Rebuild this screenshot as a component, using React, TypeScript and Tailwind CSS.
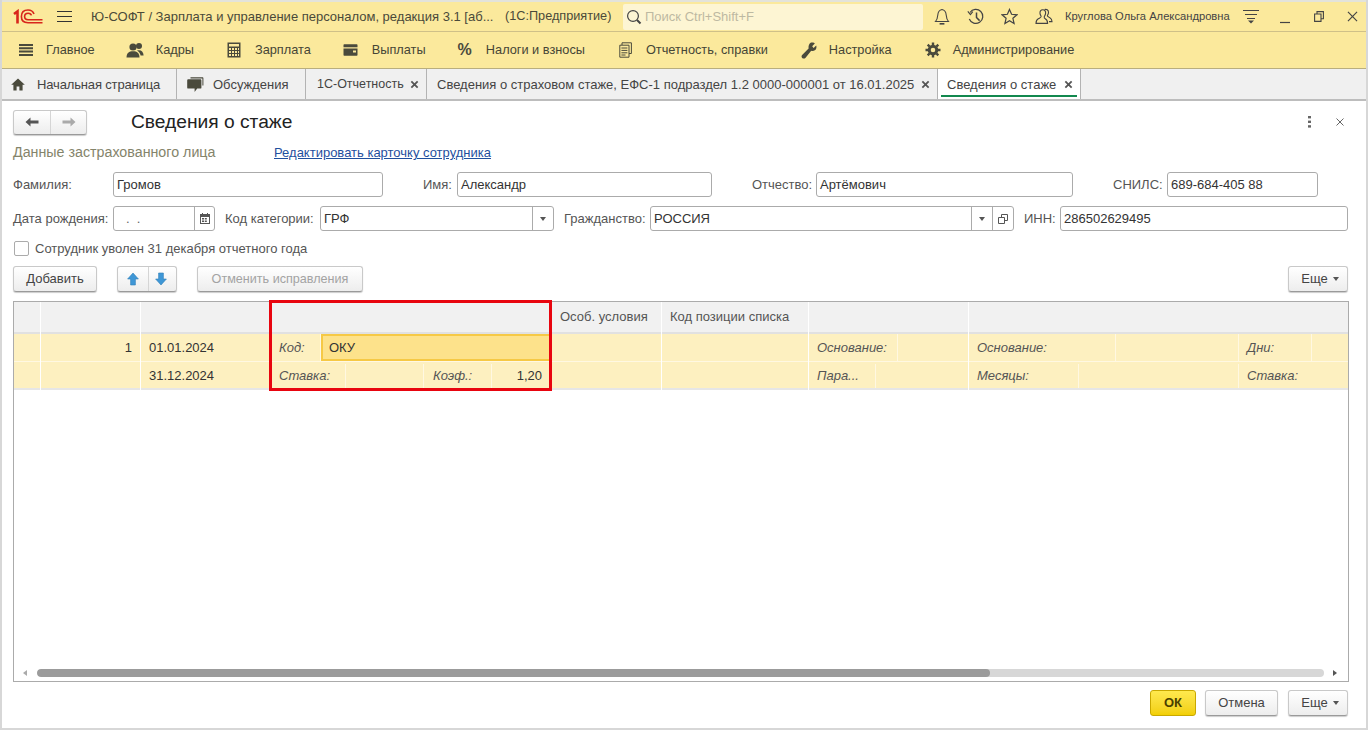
import React from "react";

function Logo() {
  return (
    <svg width="30" height="15" viewBox="0 0 30 15" fill="none" stroke="#d8261c">
      <path d="M1 5L4.5 2.4V14.6" strokeWidth="2.6" />
      <path d="M21 5 C20 2.2 18 1 15 1 C10.5 1 8.4 4 8.4 7.6 C8.4 11.4 10.5 13.8 15 13.8 H29.5" strokeWidth="1.6" />
      <path d="M18.4 6.4 C18 5 16.8 4.2 15.2 4.2 C12.8 4.2 11.6 5.8 11.6 7.6 C11.6 9.6 12.8 10.8 15.2 10.8 H29.5" strokeWidth="1.6" />
    </svg>
  );
}

function Icon({ name }: { name: string }) {
  const c = "#4a4a3c";
  if (name === "menu")
    return (
      <svg width="16" height="14" viewBox="0 0 16 14" stroke={c} strokeWidth="2">
        <path d="M1 2H15M1 5.2H15M1 8.6H15M1 12H15" />
      </svg>
    );
  if (name === "people")
    return (
      <svg width="18" height="16" viewBox="0 0 18 16" fill={c}>
        <circle cx="7" cy="5" r="3.6" />
        <path d="M0.5 15.5C0.5 11 3 9.2 7 9.2S13.5 11 13.5 15.5Z" />
        <circle cx="13" cy="4" r="3" />
        <path d="M11 8.4C15 7.4 17.6 9.4 17.6 13.6H14.6C14.4 11.4 13 9.6 11 8.4Z" />
      </svg>
    );
  if (name === "calc")
    return (
      <svg width="14" height="16" viewBox="0 0 14 16" fill={c}>
        <path fillRule="evenodd" d="M0.5 0.5H13.5V15.5H0.5ZM2 2V4.5H12V2ZM2 6V8H4V6ZM5 6V8H7V6ZM8 6V8H10V6ZM11 6V8H12V6ZM2 9V11H4V9ZM5 9V11H7V9ZM8 9V11H10V9ZM11 9V11H12V9ZM2 12V14H4V12ZM5 12V14H7V12ZM8 12V14H10V12ZM11 12V14H12V12Z" />
      </svg>
    );
  if (name === "card")
    return (
      <svg width="15" height="12" viewBox="0 0 15 12" fill={c}>
        <path fillRule="evenodd" d="M0.5 1C0.5 0.6 0.8 0.2 1.2 0.2H13.8C14.2 0.2 14.5 0.6 14.5 1V11C14.5 11.4 14.2 11.8 13.8 11.8H1.2C0.8 11.8 0.5 11.4 0.5 11ZM0.5 3.2V4.4H14.5V3.2ZM10 6.6V8.6H13V6.6Z" />
      </svg>
    );
  if (name === "docs")
    return (
      <svg width="13" height="16" viewBox="0 0 13 16" fill="none" stroke={c} strokeWidth="1">
        <path d="M3 3V0.8H12.4V11.5H10" />
        <path d="M0.8 3.2H10V15.2H0.8Z" />
        <path d="M2.4 6H8.4M2.4 8.4H8.4M2.4 10.8H8.4M2.4 13H6.5" />
      </svg>
    );
  if (name === "wrench")
    return (
      <svg width="16" height="17" viewBox="0 0 16 17" fill={c}>
        <path d="M10 0.6C12 0.2 13.2 0.8 13.8 1.4L11.2 4.2L12.6 6L15.2 3.4C15.8 5.2 15.4 7 14.2 8C13 9 11.4 9.2 10.2 8.8L4.4 16C3.4 16.9 1.9 16.7 1.2 15.9C0.4 15 0.3 13.8 1.1 12.9L7.6 6.6C7.2 4.2 8 1.6 10 0.6Z" />
      </svg>
    );
  if (name === "gear")
    return (
      <svg width="16" height="16" viewBox="0 0 16 16" fill="none" stroke={c}>
        <circle cx="8" cy="8" r="3.8" strokeWidth="3" />
        <path d="M8 0.5V3M8 13V15.5M0.5 8H3M13 8H15.5M2.7 2.7L4.5 4.5M11.5 11.5L13.3 13.3M13.3 2.7L11.5 4.5M4.5 11.5L2.7 13.3" strokeWidth="2.4" />
      </svg>
    );
  if (name === "home")
    return (
      <svg width="14" height="13" viewBox="0 0 14 13" fill={c}>
        <path d="M7 0.5L13.8 6.8H11.6V12.6H8.4V8.4H5.6V12.6H2.4V6.8H0.2Z" />
      </svg>
    );
  if (name === "chat")
    return (
      <svg width="17" height="17" viewBox="0 0 17 17" fill={c}>
        <path d="M3.5 1.2H15.4C16 1.2 16.4 1.6 16.4 2.2V9.6H15.4V2.4H3.5Z" />
        <path d="M1.4 3.2H13.2C14 3.2 14.4 3.6 14.4 4.4V11.4C14.4 12.2 14 12.6 13.2 12.6H10.2L7.6 16V12.6H1.4C0.7 12.6 0.2 12.2 0.2 11.4V4.4C0.2 3.6 0.7 3.2 1.4 3.2Z" />
      </svg>
    );
  return null;
}

const navItems: [string, string, string][] = [
  ["menu", "Главное", "ml-[18px] mr-[12px]"],
  ["people", "Кадры", "ml-[31px] mr-[12px]"],
  ["calc", "Зарплата", "ml-[33px] mr-[14px]"],
  ["card", "Выплаты", "ml-[32px] mr-[14px]"],
  ["percent", "Налоги и взносы", "ml-[32px] mr-[14px]"],
  ["docs", "Отчетность, справки", "ml-[34px] mr-[14px]"],
  ["wrench", "Настройка", "ml-[33px] mr-[12px]"],
  ["gear", "Администрирование", "ml-[33px] mr-[12px]"],
];

function X({ size = 9, sw = 2, color = "#555" }: { size?: number; sw?: number; color?: string }) {
  return (
    <svg width={size} height={size} viewBox="0 0 10 10" stroke={color} strokeWidth={sw}>
      <path d="M1.5 1.5L8.5 8.5M8.5 1.5L1.5 8.5" />
    </svg>
  );
}

function Tab({ children, w, active, close }: { children: React.ReactNode; w: string; active?: boolean; close?: boolean }) {
  return (
    <div className={`relative flex h-full items-center justify-between border-r border-[#b3b3b3] pt-px ${w} ${active ? "bg-white" : ""}`}>
      {children}
      {close && <span className="mr-[7px] flex"><X /></span>}
      {active && <div className="absolute bottom-[2px] left-[3px] right-[3px] h-[2px] bg-[#12884e]" />}
    </div>
  );
}

const inputCls = "flex items-center h-[25px] border border-[#ababab] rounded-[3px] bg-white text-[#333] pl-[3px]";
const btnCls = "rounded-[3px] border border-[#c9c9c9] border-b-[#9a9a9a] bg-gradient-to-b from-white to-[#ededed] shadow-[0_1px_1px_rgba(0,0,0,0.2)]";

function Caret() {
  return (
    <svg width="6" height="4" viewBox="0 0 6 4" fill="#555">
      <path d="M0 0H6L3 4Z" />
    </svg>
  );
}

function Btn({ className, children, disabled }: { className?: string; children: React.ReactNode; disabled?: boolean }) {
  return (
    <div className={`flex h-[26px] items-center justify-center ${btnCls} ${disabled ? "text-[#a3a3a3]" : "text-[#444]"} ${className ?? ""}`}>
      {children}
    </div>
  );
}

function Arrow({ up }: { up?: boolean }) {
  return (
    <svg width="12" height="14" viewBox="0 0 12 14" fill="#3f97d6" stroke="#2f7fb8" strokeWidth="0.6">
      {up ? <path d="M6 1L11.4 7H8.4V13H3.6V7H0.6Z" /> : <path d="M6 13L11.4 7H8.4V1H3.6V7H0.6Z" />}
    </svg>
  );
}

function HArrow({ left, color }: { left?: boolean; color: string }) {
  return (
    <svg width="14" height="10" viewBox="0 0 14 10" fill={color}>
      {left ? <path d="M0.5 5L5.5 0.5V3.6H13.5V6.4H5.5V9.5Z" /> : <path d="M13.5 5L8.5 0.5V3.6H0.5V6.4H8.5V9.5Z" />}
    </svg>
  );
}

const L = ({ w, children, className }: { w: string; children?: React.ReactNode; className?: string }) => (
  <div className={`flex h-full shrink-0 items-center overflow-hidden whitespace-nowrap border-r border-[#fff8e2] pl-[8px] italic text-[#555] ${w} ${className ?? ""}`}>
    {children}
  </div>
);

function Col({ w, head, r1, r2, last }: { w: string; head?: string; r1?: React.ReactNode; r2?: React.ReactNode; last?: boolean }) {
  return (
    <div className={`flex shrink-0 flex-col ${w} ${last ? "" : "border-r border-white"}`}>
      <div className="flex h-[32px] items-center whitespace-nowrap border-b-2 border-[#e1e1e1] bg-[#f1f1f1] pl-[8px] text-[#555]">{head}</div>
      <div className="flex h-[28px] items-center border-b border-[#fff8e2] bg-[#fdf0c0]">{r1}</div>
      <div className="flex h-[28px] items-center border-b-2 border-[#e6e6e6] bg-[#fdf0c0] pt-[2px]">{r2}</div>
    </div>
  );
}

export default function App() {
  return (
    <div
      className="box-border flex h-[730px] w-[1368px] flex-col overflow-hidden border-x-2 border-b-2 border-[#d7d7d7] bg-white text-[13px]"
      style={{ fontFamily: '"Liberation Sans", Arial, sans-serif' }}
    >
      {/* title bar */}
      <div className="-mx-[2px] flex h-[32px] shrink-0 items-center border-t-[2px] border-b border-[#e3e3da] border-b-[#cfc088] bg-[#fbe99c] text-[#4a4a3a]">
        <span className="ml-[13px] flex w-[30px]"><Logo /></span>
        <span className="ml-[14px] flex w-[15px] flex-col gap-[4px]">
          <i className="h-px bg-[#333]" /><i className="h-px bg-[#333]" /><i className="h-px bg-[#333]" />
        </span>
        <span className="ml-[19px] w-[403px] whitespace-nowrap">Ю-СОФТ / Зарплата и управление персоналом, редакция 3.1 [аб...</span>
        <span className="ml-[11px] w-[107px] whitespace-nowrap text-[12.7px]">(1С:Предприятие)</span>
        <div className="ml-[11px] flex h-[26px] w-[300px] items-center rounded-[2px] bg-[#fdf5d3] pl-[3px] text-[#bdb9a2]">
          <svg width="16" height="16" viewBox="0 0 16 16" fill="none" stroke="#444" strokeWidth="1.2">
            <circle cx="7" cy="7" r="5.4" />
            <path d="M11 11L14.5 14.5" strokeWidth="2" />
          </svg>
          <span className="ml-[3px]">Поиск Ctrl+Shift+F</span>
        </div>
        <svg className="ml-[11px]" width="16" height="18" viewBox="0 0 16 18" fill="none" stroke="#444" strokeWidth="1.1">
          <path d="M8 1.5C5.2 2 4 4 3.8 7C3.6 10 2.8 12 1.5 13.5H14.5C13.2 12 12.4 10 12.2 7C12 4 10.8 2 8 1.5Z" />
          <path d="M5.6 15.8H10.4" strokeWidth="1.6" />
        </svg>
        <svg className="ml-[17px]" width="18" height="18" viewBox="0 0 18 18" fill="none" stroke="#444" strokeWidth="1.2">
          <path d="M3 4.5A7 7 0 1 1 2.3 11" />
          <path d="M0.8 3.4L3.4 6.6L5.8 3.6" strokeWidth="1.1" />
          <path d="M9.5 4.5V9.5L12.6 12.6" strokeWidth="1.5" />
        </svg>
        <svg className="ml-[16px]" width="17" height="17" viewBox="0 0 17 17" fill="none" stroke="#444" strokeWidth="1.2">
          <path d="M8.5 1.4L10.6 6.3L15.9 6.8L11.9 10.3L13.1 15.6L8.5 12.8L3.9 15.6L5.1 10.3L1.1 6.8L6.4 6.3Z" />
        </svg>
        <svg className="ml-[17px]" width="18" height="17" viewBox="0 0 18 17" fill="none" stroke="#444" strokeWidth="1.1">
          <path d="M7.8 1.8C5.6 1.8 4.8 3.6 5 5.4C5.1 6.8 5.8 7.6 6.2 8.2C6.4 9.4 5 9.8 3.6 10.6C2 11.4 1 12.4 1 15.4H12.6C12.6 12.4 11.6 11.4 10 10.6C8.8 10 9.2 9.4 9.4 8.2C9.8 7.6 10.5 6.8 10.6 5.4C10.8 3.6 10 1.8 7.8 1.8Z" />
          <path d="M9.6 1.6C11.4 0.8 13.6 2 13.5 4.6C13.4 6 12.8 6.8 12.4 7.4C12.4 8.6 13.4 8.8 14.6 9.6C16 10.4 17 11.4 17 13.6H14" />
        </svg>
        <span className="ml-[12px] w-[165px] whitespace-nowrap text-[11.2px] text-[#444]">Круглова Ольга Александровна</span>
        <svg className="ml-[13px]" width="16" height="15" viewBox="0 0 16 15" fill="#444">
          <rect x="0" y="1" width="16" height="1" />
          <rect x="2" y="5" width="12" height="1" />
          <rect x="4" y="9" width="8" height="1" />
          <path d="M5 11.5H11L8 14.5Z" />
        </svg>
        <svg className="ml-[21px]" width="10" height="14" viewBox="0 0 10 14" stroke="#444"><path d="M0 12.5H10" strokeWidth="1.2" /></svg>
        <svg className="ml-[24px]" width="10" height="11" viewBox="0 0 10 11" fill="none" stroke="#444" strokeWidth="1.1">
          <path d="M0.6 3H7V10.4H0.6Z" />
          <path d="M3 3V0.6H9.4V7.8H7" />
        </svg>
        <span className="ml-[22px] flex"><X size={13} sw={0.9} color="#444" /></span>
      </div>

      {/* section bar */}
      <div className="-mx-[2px] flex h-[37px] shrink-0 items-center border-b border-[#b9ae7e] bg-[#fbe99c] text-[12.75px] text-[#454536]">
        {navItems.map(([ic, label, cls]) => (
          <div key={label} className="flex items-center">
            <span className={`flex ${cls}`}>
              {ic === "percent" ? (
                <span className="text-[16px] font-bold leading-none text-[#4a4a3c]">%</span>
              ) : (
                <Icon name={ic} />
              )}
            </span>
            <span className="whitespace-nowrap">{label}</span>
          </div>
        ))}
      </div>

      {/* tabs */}
      <div className="-mx-[2px] flex h-[32px] shrink-0 items-center border-b-2 border-[#bdbdbd] bg-[#f0f0f0] text-[#444]">
        <Tab w="w-[177px]">
          <span className="ml-[11px] flex"><Icon name="home" /></span>
          <span className="ml-[12px] mr-auto whitespace-nowrap tracking-[-0.15px]">Начальная страница</span>
        </Tab>
        <Tab w="w-[129px]">
          <span className="ml-[10px] flex"><Icon name="chat" /></span>
          <span className="ml-[9px] mr-auto">Обсуждения</span>
        </Tab>
        <Tab w="w-[121px]" close>
          <span className="ml-[11px] whitespace-nowrap text-[12.5px]">1С-Отчетность</span>
        </Tab>
        <Tab w="w-[511px]" close>
          <span className="ml-[10px] whitespace-nowrap">Сведения о страховом стаже, ЕФС-1 подраздел 1.2 0000-000001 от 16.01.2025</span>
        </Tab>
        <Tab w="w-[143px]" active close>
          <span className="ml-[9px] whitespace-nowrap">Сведения о стаже</span>
        </Tab>
      </div>

      {/* form */}
      <div className="flex min-h-0 flex-1 flex-col text-[#555]">
        <div className="mt-[8px] flex h-[26px] items-center pl-[11px]">
          <div className={`flex h-[25px] w-[74px] ${btnCls}`}>
            <div className="flex w-[37px] items-center justify-center border-r border-[#d5d5d5]"><HArrow left color="#555" /></div>
            <div className="flex flex-1 items-center justify-center"><HArrow color="#aaa" /></div>
          </div>
          <div className="ml-[44px] whitespace-nowrap text-[19.2px] text-[#222]">Сведения о стаже</div>
          <div className="ml-auto flex items-center">
            <svg width="3" height="12" viewBox="0 0 3 12" fill="#666"><rect width="3" height="2.4" /><rect y="4.6" width="3" height="2.4" /><rect y="9.2" width="3" height="2.4" /></svg>
            <span className="ml-[24px] mr-[21px] flex"><X size={10} sw={1} color="#666" /></span>
          </div>
        </div>

        <div className="mt-[10px] flex h-[16px] items-center pl-[11px]">
          <span className="w-[261px] whitespace-nowrap text-[14.25px] text-[#84846b]">Данные застрахованного лица</span>
          <span className="whitespace-nowrap text-[#1f4f9e] underline">Редактировать карточку сотрудника</span>
        </div>

        <div className="mt-[11px] flex h-[25px] items-center pl-[11px]">
          <span className="w-[100px]">Фамилия:</span>
          <div className={`${inputCls} w-[270px]`}>Громов</div>
          <span className="ml-[40px] w-[34px]">Имя:</span>
          <div className={`${inputCls} w-[255px]`}>Александр</div>
          <span className="ml-[40px] w-[64px]">Отчество:</span>
          <div className={`${inputCls} w-[257px]`}>Артёмович</div>
          <span className="ml-[40px] w-[54px]">СНИЛС:</span>
          <div className={`${inputCls} w-[151px]`}>689-684-405 88</div>
        </div>

        <div className="mt-[9px] flex h-[25px] items-center pl-[11px]">
          <span className="w-[100px] whitespace-nowrap">Дата рождения:</span>
          <div className={`${inputCls} w-[102px] !pl-0`}>
            <span className="w-[80px] pl-[12px] text-[#666]">.&nbsp;&nbsp;.</span>
            <span className="flex h-full flex-1 items-center justify-center border-l border-[#ababab]">
              <svg width="10" height="11" viewBox="0 0 10 11" fill="#555">
                <path fillRule="evenodd" d="M0 1H2V0H3V1H7V0H8V1H10V11H0ZM1 4V10H9V4ZM2 5H4V6.5H2ZM4.8 5H6.8V6.5H4.8ZM2 7.5H4V9H2ZM4.8 7.5H6.8V9H4.8Z" />
              </svg>
            </span>
          </div>
          <span className="ml-[10px] w-[95px] whitespace-nowrap">Код категории:</span>
          <div className={`${inputCls} w-[234px] !pr-0`}>
            <span className="flex-1">ГРФ</span>
            <span className="flex h-full w-[21px] items-center justify-center border-l border-[#ababab]"><Caret /></span>
          </div>
          <span className="ml-[10px] w-[86px] whitespace-nowrap">Гражданство:</span>
          <div className={`${inputCls} w-[364px] !pr-0`}>
            <span className="flex-1">РОССИЯ</span>
            <span className="flex h-full w-[21px] items-center justify-center border-l border-[#ababab]"><Caret /></span>
            <span className="flex h-full w-[21px] items-center justify-center border-l border-[#ababab]">
              <svg width="10" height="10" viewBox="0 0 10 10" fill="none" stroke="#555">
                <path d="M3.5 3.5V0.5H9.5V6.5H6.5" />
                <path d="M0.5 3.5H6.5V9.5H0.5Z" />
              </svg>
            </span>
          </div>
          <span className="ml-[10px] w-[36px]">ИНН:</span>
          <div className={`${inputCls} w-[288px]`}>286502629495</div>
        </div>

        <div className="mt-[10px] flex h-[15px] items-center pl-[12px]">
          <span className="h-[15px] w-[15px] rounded-[2px] border border-[#ababab] bg-white" />
          <span className="ml-[6px] whitespace-nowrap">Сотрудник уволен 31 декабря отчетного года</span>
        </div>

        <div className="mt-[10px] flex h-[26px] items-center pl-[11px] pr-[18px]">
          <Btn className="w-[84px]">Добавить</Btn>
          <div className={`ml-[20px] flex h-[26px] w-[60px] ${btnCls}`}>
            <div className="flex w-[31px] items-center justify-center border-r border-[#d5d5d5]"><Arrow up /></div>
            <div className="flex flex-1 items-center justify-center pr-[3px]"><Arrow /></div>
          </div>
          <Btn className="ml-[20px] w-[166px] text-[12.6px]" disabled>Отменить исправления</Btn>
          <Btn className="ml-auto w-[60px] gap-[5px] pl-[4px]">Еще <Caret /></Btn>
        </div>

        <div className="relative ml-[11px] mt-[9px] flex h-[381px] w-[1336px] flex-col border border-[#ababab]">
          <div className="flex overflow-hidden">
            <Col w="w-[27px]" />
            <Col w="w-[100px]" r1={<div className="w-full pr-[8px] text-right text-[#333]">1</div>} />
            <Col w="w-[130px]" r1={<span className="pl-[8px] text-[#333]">01.01.2024</span>} r2={<span className="pl-[8px] text-[#333]">31.12.2024</span>} />
            <Col
              w="w-[281px]"
              r1={
                <>
                  <L w="w-[50px]">Код:</L>
                  <div className="flex h-full flex-1 items-center border-2 border-[#f6c945] bg-[#fde28b] pl-[6px] text-[#333]">ОКУ</div>
                </>
              }
              r2={
                <>
                  <L w="w-[75px]">Ставка:</L>
                  <L w="w-[78px]" />
                  <L w="w-[68px]" className="!pl-[9px]">Коэф.:</L>
                  <div className="flex-1 pr-[9px] text-right text-[#333]">1,20</div>
                </>
              }
            />
            <Col w="w-[110px]" head="Особ. условия" />
            <Col w="w-[147px]" head="Код позиции списка" />
            <Col w="w-[160px]" r1={<L w="w-[89px]">Основание:</L>} r2={<L w="w-[67px]">Пара...</L>} />
            <Col
              w="w-[380px]"
              last
              r1={<><L w="w-[147px]">Основание:</L><L w="w-[123px]" /><L w="w-[73px]">Дни:</L></>}
              r2={<><L w="w-[110px]">Месяцы:</L><L w="w-[160px]" /><L w="w-[110px]">Ставка:</L></>}
            />
          </div>

          <div className="mb-[4px] mt-auto flex h-[8px] items-center">
            <svg className="ml-[9px]" width="4" height="6" viewBox="0 0 4 6" fill="#aaa"><path d="M4 0V6L0 3Z" /></svg>
            <div className="ml-[10px] flex h-[8px] w-[1287px] overflow-hidden rounded-full bg-[#d7d7d7]">
              <div className="h-full w-[953px] rounded-full bg-[#9b9b9b]" />
            </div>
            <svg className="ml-[9px]" width="4" height="6" viewBox="0 0 4 6" fill="#555"><path d="M0 0V6L4 3Z" /></svg>
          </div>

          <div className="pointer-events-none absolute left-[255px] top-[-2px] h-[91px] w-[283px] border-[3px] border-[#e8050f]" />
        </div>

        <div className="mt-[8px] flex h-[26px] items-center justify-end pr-[18px]">
          <div className="flex h-[26px] w-[46px] items-center justify-center rounded-[3px] border border-[#c9a800] bg-gradient-to-b from-[#ffe94d] to-[#f2cf00] font-bold text-[#4a4000]">ОК</div>
          <Btn className="ml-[9px] w-[73px]">Отмена</Btn>
          <Btn className="ml-[10px] w-[60px] gap-[5px] pl-[4px]">Еще <Caret /></Btn>
        </div>
      </div>
    </div>
  );
}
